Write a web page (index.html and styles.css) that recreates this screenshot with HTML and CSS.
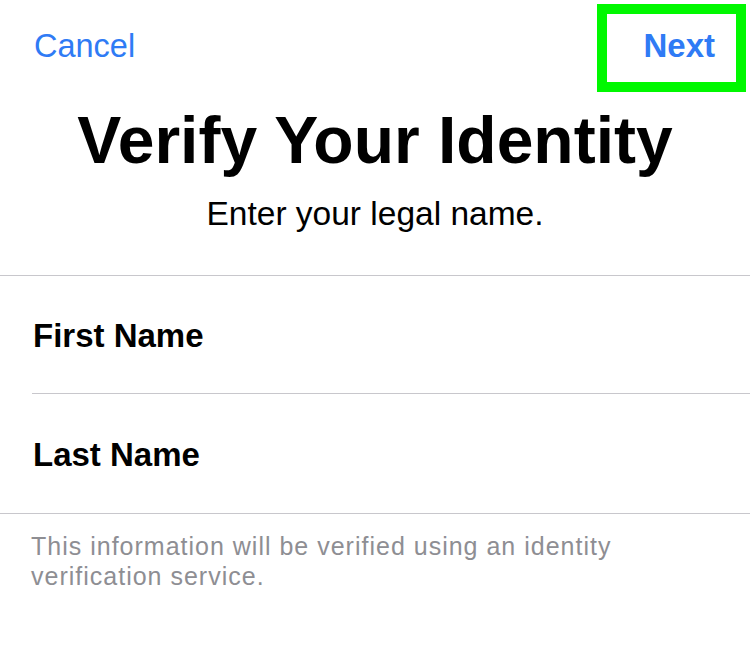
FILE: index.html
```html
<!DOCTYPE html>
<html lang="en">
<head>
<meta charset="utf-8">
<title>Verify Your Identity</title>
<link rel="stylesheet" href="styles.css">
</head>
<body>
<div class="screen">
  <header class="nav">
    <a class="nav-btn cancel">Cancel</a>
    <a class="nav-btn next">Next</a>
    <span class="highlight" aria-hidden="true"></span>
  </header>
  <h1 class="title">Verify Your Identity</h1>
  <p class="subtitle">Enter your legal name.</p>
  <div class="form-list">
    <div class="row"><div class="row-inner">First Name</div></div>
    <div class="row"><div class="row-inner last">Last Name</div></div>
  </div>
  <p class="footnote">This information will be verified using an identity verification service.</p>
</div>
</body>
</html>
```

FILE: styles.css
```css
html, body {
  margin: 0;
  padding: 0;
  background: #ffffff;
}

.screen {
  position: relative;
  width: 750px;
  height: 663px;
  overflow: hidden;
  font-family: "Liberation Sans", Arial, sans-serif;
  color: #000;
}

.nav {
  display: flex;
  justify-content: space-between;
  align-items: center;
  padding: 26px 35px 0 34px;
  height: 40px;
}

.nav-btn {
  font-size: 32.5px;
  line-height: 40px;
  color: #2f7bf5;
}

.nav-btn.next {
  font-weight: bold;
  font-size: 33px;
}

.highlight {
  position: absolute;
  top: 4px;
  right: 4px;
  width: 149px;
  height: 88px;
  box-sizing: border-box;
  border: 10px solid #00f800;
}

.title {
  margin: 35px 0 0;
  font-size: 66px;
  line-height: 78px;
  font-weight: bold;
  text-align: center;
}

.subtitle {
  margin: 15px 0 0;
  font-size: 33.5px;
  line-height: 40px;
  text-align: center;
}

.form-list {
  margin-top: 41px;
  border-top: 1px solid #c8c7cc;
  border-bottom: 1px solid #c8c7cc;
}

.row {
  padding-left: 32px;
}

.row-inner {
  height: 118px;
  display: flex;
  align-items: center;
  padding: 2px 0 0 1px;
  box-sizing: border-box;
  font-size: 33px;
  line-height: 40px;
  font-weight: bold;
  border-bottom: 1px solid #c8c7cc;
}

.row-inner.last {
  height: 119px;
  border-bottom: none;
}

.footnote {
  margin: 0;
  padding: 17px 100px 0 31px;
  font-size: 25px;
  line-height: 30px;
  letter-spacing: 1px;
  color: #8e8e93;
}
```
